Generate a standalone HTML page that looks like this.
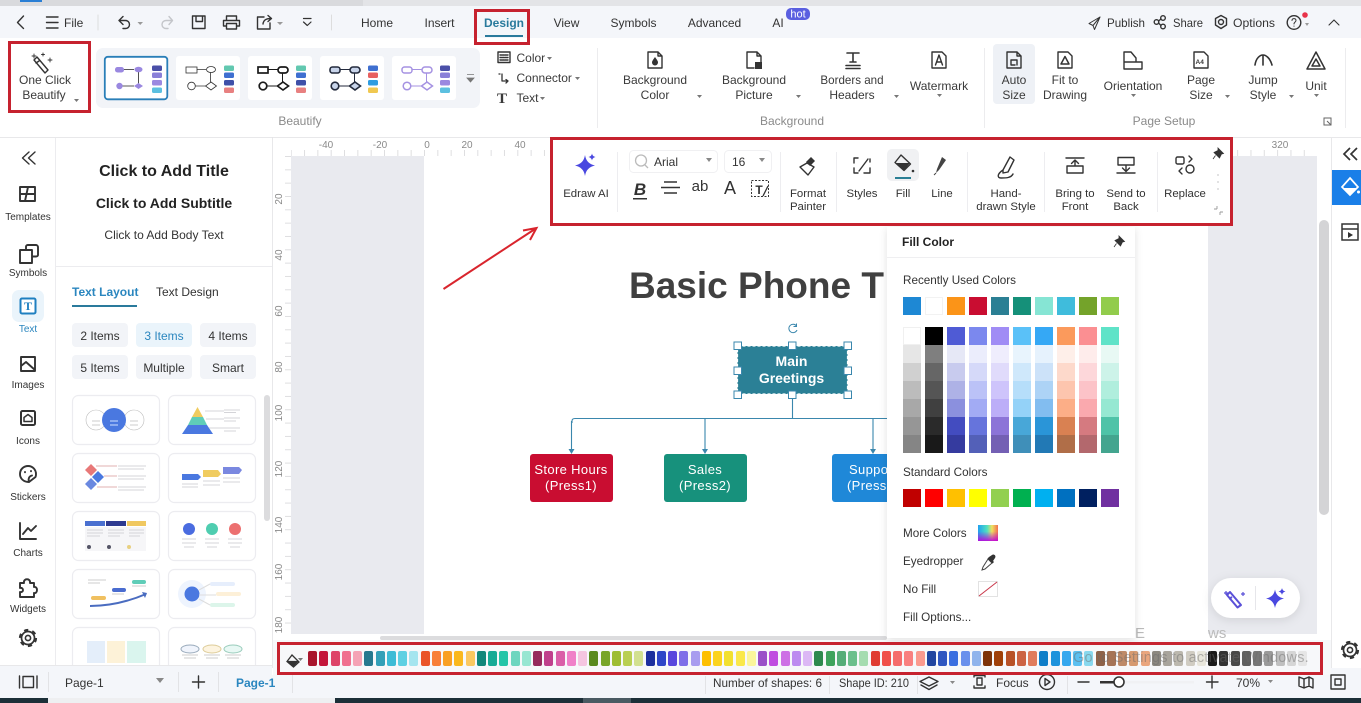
<!DOCTYPE html>
<html lang="en"><head><meta charset="utf-8"><title>Basic Phone Tree</title>
<style>
html,body{margin:0;padding:0;background:#fff;width:1361px;height:703px;overflow:hidden}
body{position:relative;font-family:"Liberation Sans",sans-serif}
svg{position:absolute;left:0;top:0;display:block}
svg text{font-family:"Liberation Sans",sans-serif;font-size:12px;fill:#333}
.m{text-anchor:middle}
.ic{fill:none;stroke:#333;stroke-width:1.4;stroke-linejoin:round;stroke-linecap:round}
.rbn text{fill:#3a3a3a}
svg text.tb{font-size:11.4px}
.g{fill:#8a8a8a!important}
.r{font-size:10px!important;fill:#8a8a8a!important}
.card{fill:#fff;stroke:#ececf0;stroke-width:1.2}
.chip{fill:#f2f4f8}
#pop{position:absolute;left:887px;top:227px;width:248px;height:411px;background:#fff;box-shadow:0 2px 8px rgba(0,0,0,.12);color:#333;font-size:11.7px}
#pop div.l{position:absolute;left:16px;white-space:nowrap;line-height:14px}
.row{position:absolute;left:16px;display:flex;gap:4px}
.row i{display:block;width:18px;height:18px}
.col{position:absolute;top:100px;width:18px}
.col i{display:block;width:18px;height:18px}
#bar{position:absolute;left:308px;top:651px;display:flex;gap:2.25px}
#bar i{display:block;width:9px;height:15px;border-radius:2px}
.box{position:absolute;border:3px solid #c6222f;box-sizing:border-box}
#wm{position:absolute;left:1073px;top:650px;font-size:14.5px;color:#6a6a6a;opacity:.45;white-space:nowrap;letter-spacing:.2px}
</style></head><body>
<svg width="1361" height="703" viewBox="0 0 1361 703">
<defs>
<pattern id="hr" x="424" y="0" width="13.33" height="10" patternUnits="userSpaceOnUse"><rect width="1" height="10" fill="#dedee0"/></pattern>
<pattern id="vr" x="0" y="156" width="10" height="13.33" patternUnits="userSpaceOnUse"><rect width="10" height="1" fill="#dedee0"/></pattern>
</defs>
<!-- base -->
<rect width="1361" height="703" fill="#fff"/>
<rect width="1361" height="6" fill="#e3e4e7"/><rect width="363" height="6" fill="#d9dadd"/><rect x="20" width="22" height="2" fill="#2a7fd5"/>
<rect y="6" width="1361" height="32" fill="#f4f6fa"/>
<rect y="137" width="1361" height="1" fill="#e8e8ea"/>

<!-- title row -->
<g class="ic">
<path d="M23.500 16L17.500 22.500L23.500 28.500"/>
<path d="M46.500 17H58M46.500 22.500H58M46.500 28H58"/>
<path d="M98 15V30" stroke="#ddd" stroke-width="1"/>
<path d="M123 16.500L119 20.500L123 24.500M119 20.500H125.500A4 4 0 0 1 125.500 28.500H123"/>
<path d="M169 16.500L172.500 20.500L169 24.500M172.500 20.500H166A4 4 0 0 0 166 28.500H168" stroke="#c4c6ca"/>
<path d="M193 16H205V28.500H192.500V16ZM196 16V21.500H202.500V16"/>
<path d="M226.500 20.500V16H236.500V20.500M226.500 26H223.500V20.500H239.500V26H236.500M226.500 23.500H236.500V29H226.500Z"/>
<path d="M264 17H257.500V29H270V23M263 24C263.500 20 266 18.500 271 18.500M268 15.500L271.500 18.500L268 21.500"/>
<path d="M303.500 18.500H311M303.500 22L307.300 25.500L311 22" stroke-width="1.200"/>
<path d="M331.500 15V30" stroke="#ddd" stroke-width="1"/>
</g>
<path d="M137.500 22H143L140.200 25ZM277 22H283L280 25Z" fill="#999"/>
<text x="64" y="27">File</text>
<text x="377" y="27" class="m">Home</text><text x="439.500" y="27" class="m">Insert</text>
<text x="504" y="27" class="m" style="fill:#2a7a9c;font-weight:700">Design</text>
<rect x="485" y="35" width="38" height="2" fill="#2a7a9c"/>
<text x="566.500" y="27" class="m">View</text><text x="633.500" y="27" class="m">Symbols</text><text x="714.500" y="27" class="m">Advanced</text><text x="778" y="27" class="m">AI</text>
<rect x="786" y="8" width="24" height="12" rx="5" fill="#5a5fe0"/><text x="798" y="17.500" class="m" style="fill:#fff;font-size:11px">hot</text>
<g class="ic" stroke-width="1.100">
<path d="M1100 17L1089 23.500L1093 25.500L1094.500 29.500L1100 17ZM1093 25.500L1100 17" stroke-width="1"/>
<circle cx="1156.500" cy="22" r="2.300"/><circle cx="1163" cy="18" r="2.300"/><circle cx="1163" cy="26.500" r="2.300"/><path d="M1158.500 21L1161 19M1158.500 23L1161 25.500"/>
<path d="M1221 15.500L1226.500 18.500V25L1221 28.500L1215.500 25V18.500Z"/><circle cx="1221" cy="22" r="2.500"/>
<circle cx="1294" cy="22.500" r="6.800"/><path d="M1292 20.500C1292 18 1296 18 1296 20.500C1296 22 1294 22 1294 24M1294 26V26.300" stroke-width="1"/>
<path d="M1329 25L1334 20L1339 25" stroke-width="1.100"/>
</g>
<path d="M1305 23H1309L1307 26Z" fill="#999"/>
<circle cx="1305" cy="15" r="2.800" fill="#e8334a"/>
<text x="1107" y="27" textLength="38" lengthAdjust="spacingAndGlyphs">Publish</text><text x="1173" y="27" textLength="30" lengthAdjust="spacingAndGlyphs">Share</text><text x="1233" y="27" textLength="42" lengthAdjust="spacingAndGlyphs">Options</text>

<!-- ribbon -->
<g class="rbn">
<g class="ic" stroke-width="1.300"><path d="M37 57L48 70L45 73L34 60ZM39 61L36 63"/><path d="M34 54V58M32 56H36M50 58V62M48 60H52M43 53V56M41.500 54.500H44.500" stroke-width=".9"/></g>
<text x="45" y="84" class="m">One Click</text><text x="44" y="99" class="m">Beautify</text>
<path d="M74 99H79L76.500 102Z" fill="#777"/>
<rect x="96" y="48" width="384" height="60" rx="7" fill="#f2f4f8"/>
<rect x="104.800" y="56.800" width="62.500" height="42.500" rx="3" fill="#fff" stroke="#2a7fb8" stroke-width="1.800"/>
<rect x="176" y="56" width="64" height="44" rx="3" fill="#fff"/><rect x="248" y="56" width="64" height="44" rx="3" fill="#fff"/><rect x="320" y="56" width="64" height="44" rx="3" fill="#fff"/><rect x="392" y="56" width="64" height="44" rx="3" fill="#fff"/>
<!-- thumb1 -->
<g transform="translate(104 56)"><path d="M14 13.500H30M34.500 14V30M30 30H16" stroke="#222" stroke-width=".8" fill="none"/><rect x="11" y="11" width="9" height="5.500" rx="2.500" fill="#9a88e0"/><ellipse cx="34.500" cy="13.500" rx="4" ry="2.800" fill="#9a88e0"/><circle cx="15.500" cy="30" r="3.200" fill="#9a88e0"/><path d="M34.500 27L39 30L34.500 33L30 30Z" fill="#9a88e0"/><rect x="48" y="9.500" width="10" height="5.500" rx="1.500" fill="#4a4fa8"/><rect x="48" y="16.500" width="10" height="5.500" rx="1.500" fill="#8a80d8"/><rect x="48" y="24" width="10" height="5.500" rx="1.500" fill="#9a88e0"/><rect x="48" y="31.500" width="10" height="5.500" rx="1.500" fill="#5cc0e0"/></g>
<!-- thumb2 -->
<g transform="translate(176 56)" fill="#fff" stroke="#333" stroke-width=".8"><path d="M10 13.500H30M34.500 14V30M30 30H16" fill="none"/><rect x="10" y="11" width="11" height="6"/><ellipse cx="35" cy="13.500" rx="4.500" ry="3"/><circle cx="15.500" cy="30" r="3.800"/><path d="M35 26L40.500 30L35 34L29.500 30Z"/><g stroke="none"><rect x="48" y="9.500" width="10" height="5.500" rx="1.500" fill="#62c8b0"/><rect x="48" y="16.500" width="10" height="5.500" rx="1.500" fill="#3f6fd0"/><rect x="48" y="24" width="10" height="5.500" rx="1.500" fill="#3f50a8"/><rect x="48" y="31.500" width="10" height="5.500" rx="1.500" fill="#e88080"/></g></g>
<!-- thumb3 -->
<g transform="translate(248 56)" fill="#fff" stroke="#1a1a1a" stroke-width="1.700"><path d="M10 13.500H30M34.500 14V30M30 30H16" fill="none" stroke-width="1"/><rect x="10" y="11" width="10" height="6"/><rect x="30" y="11" width="10" height="6" rx="3"/><circle cx="15" cy="30" r="3.800"/><path d="M35 26L40.500 30L35 34L29.500 30Z"/><g stroke="none"><rect x="48" y="9.500" width="10" height="5.500" rx="1.500" fill="#62c8b0"/><rect x="48" y="16.500" width="10" height="5.500" rx="1.500" fill="#3f6fd0"/><rect x="48" y="24" width="10" height="5.500" rx="1.500" fill="#3f50a8"/><rect x="48" y="31.500" width="10" height="5.500" rx="1.500" fill="#e88080"/></g></g>
<!-- thumb4 -->
<g transform="translate(320 56)" fill="#c8d4ea" stroke="#232a3c" stroke-width="1.600"><path d="M10 13.500H30M34.500 14V30M30 30H16" fill="none" stroke-width="1"/><rect x="10" y="11" width="10" height="6" rx="2.500"/><rect x="30" y="11" width="10" height="6" rx="3"/><circle cx="15" cy="30" r="3.800"/><path d="M35 26L40.500 30L35 34L29.500 30Z"/><g stroke="none"><rect x="48" y="9.500" width="10" height="5.500" rx="1.500" fill="#3f6fd0"/><rect x="48" y="16.500" width="10" height="5.500" rx="1.500" fill="#e86060"/><rect x="48" y="24" width="10" height="5.500" rx="1.500" fill="#2f9ce0"/><rect x="48" y="31.500" width="10" height="5.500" rx="1.500" fill="#f0c850"/></g></g>
<!-- thumb5 -->
<g transform="translate(392 56)" fill="#fff" stroke="#a592e2" stroke-width="1.500"><path d="M10 13.500H30M34.500 14V30M30 30H16" fill="none" stroke-width="1"/><rect x="10" y="11" width="10" height="6" rx="2.500"/><rect x="30" y="11" width="10" height="6" rx="3"/><circle cx="15" cy="30" r="3.800"/><path d="M35 26L40.500 30L35 34L29.500 30Z"/><g stroke="none"><rect x="48" y="9.500" width="10" height="5.500" rx="1.500" fill="#4a4fa8"/><rect x="48" y="16.500" width="10" height="5.500" rx="1.500" fill="#8a80d8"/><rect x="48" y="24" width="10" height="5.500" rx="1.500" fill="#9a88e0"/><rect x="48" y="31.500" width="10" height="5.500" rx="1.500" fill="#5cc0e0"/></g></g>
<path d="M467 74.500H474M467 78H474L470.500 82Z" fill="#777" stroke="#777" stroke-width=".8"/>
<text x="300" y="125" class="m g">Beautify</text>
<!-- color connector text -->
<g class="ic" stroke-width="1.200"><rect x="498" y="52" width="12" height="10.500"/><path d="M500 55H508M500 57.500H508M500 60H508" stroke-dasharray="1.500 1"/><path d="M502 74V81H508M499 74H500M508 81L506 79.500M508 81L506 83" stroke-width="1.300"/></g>
<text x="497" y="103" style="font-family:'Liberation Serif',serif;font-weight:700;font-size:15px">T</text>
<text x="516.500" y="62">Color</text><path d="M547 57H552L549.500 60Z" fill="#777"/>
<text x="516.500" y="82">Connector</text><path d="M575 77H580L577.500 80Z" fill="#777"/>
<text x="516.500" y="102">Text</text><path d="M540 97H545L542.500 100Z" fill="#777"/>
<rect x="597" y="48" width="1" height="80" fill="#ececee"/>
<!-- background group -->
<g class="ic" stroke-width="1.300">
<path d="M648 52H658L662 56V68H648ZM658 52V56H662"/><path d="M747 52H757L761 56V64M747 52V68H754M757 52V56H761"/>
<path d="M847 53H859M853 53V62M850 62H856M846 65.500H860M846 68.500H860" stroke-width="1.600"/>
<path d="M932 52H942L946 56V68H932Z"/><path d="M935.500 65L939 55L942.500 65M936.500 62H941.500"/>
</g>
<path d="M655 57C657 60 658 61 658 62.500A3 3 0 0 1 652 62.500C652 61 653 60 655 57Z" fill="#333"/><rect x="755" y="62" width="7" height="7" fill="#333"/>
<text x="655" y="84" class="m">Background</text><text x="655" y="99" class="m">Color</text>
<text x="754" y="84" class="m">Background</text><text x="754" y="99" class="m">Picture</text>
<text x="852" y="84" class="m" style="font-size:11.6px">Borders and</text><text x="852" y="99" class="m">Headers</text>
<text x="939" y="90" class="m">Watermark</text>
<path d="M697 95H702L699.500 98ZM796 95H801L798.500 98ZM894 95H899L896.500 98ZM937 94H942L939.500 97Z" fill="#777"/>
<rect x="984" y="48" width="1" height="80" fill="#ececee"/>
<!-- page setup -->
<rect x="993" y="44" width="42" height="60" rx="4" fill="#eef1f6"/>
<g class="ic" stroke-width="1.300">
<path d="M1007 52H1017L1021 56V68H1007ZM1017 52V56H1021"/><path d="M1011 60H1017V65M1011 60V65H1015" stroke-width="1.400"/>
<path d="M1058 52H1068L1072 56V68H1058Z"/><path d="M1065 56.500L1069 64H1061Z" stroke-width="1.500"/>
<path d="M1124 52H1131L1136 58V61M1124 52V66M1124 62H1142V69H1124Z"/>
<path d="M1194 52H1204L1208 56V68H1194Z"/>
<path d="M1255 65C1256 58 1260 55 1263 55C1266 55 1270 58 1272 65M1263 55V65" stroke-width="1.600"/>
<path d="M1316 52L1325 69H1307ZM1316 59L1320 66H1312Z" stroke-width="1.500"/>
</g>
<text x="1195.500" y="64" style="font-size:6.500px;font-weight:700">A4</text>
<text x="1014" y="84" class="m">Auto</text><text x="1014" y="99" class="m">Size</text>
<text x="1065" y="84" class="m">Fit to</text><text x="1065" y="99" class="m">Drawing</text>
<text x="1133" y="90" class="m">Orientation</text>
<text x="1201" y="84" class="m">Page</text><text x="1201" y="99" class="m">Size</text>
<text x="1263" y="84" class="m">Jump</text><text x="1263" y="99" class="m">Style</text>
<text x="1316" y="90" class="m">Unit</text>
<path d="M1131 94H1136L1133.500 97ZM1225 95H1230L1227.500 98ZM1289 95H1294L1291.500 98ZM1314 94H1319L1316.500 97Z" fill="#777"/>
<rect x="1345" y="48" width="1" height="80" fill="#ececee"/>
<text x="792" y="125" class="m g">Background</text><text x="1164" y="125" class="m g">Page Setup</text>
<path d="M1324 118H1331V125H1324ZM1327 121L1331 125" fill="none" stroke="#666" stroke-width="1"/>
</g>

<!-- canvas -->
<rect x="272" y="138" width="1059" height="497" fill="#fff"/>
<rect x="291" y="156" width="1026" height="478" fill="#e9eaef"/>
<rect x="424" y="156" width="784" height="478" fill="#fff"/>
<rect x="291" y="150" width="1026" height="6" fill="url(#hr)"/>
<rect x="285" y="156" width="6" height="478" fill="url(#vr)"/>
<rect x="272" y="137" width="1" height="498" fill="#e4e4e6"/>
<text x="326" y="148" class="m r">-40</text><text x="380" y="148" class="m r">-20</text><text x="427" y="148" class="m r">0</text><text x="467" y="148" class="m r">20</text><text x="520" y="148" class="m r">40</text>
<text x="1280" y="148" class="m r">320</text>
<g class="r">
<text transform="translate(282 199) rotate(-90)" class="m r">20</text><text transform="translate(282 255) rotate(-90)" class="m r">40</text><text transform="translate(282 311) rotate(-90)" class="m r">60</text><text transform="translate(282 367) rotate(-90)" class="m r">80</text><text transform="translate(282 413) rotate(-90)" class="m r">100</text><text transform="translate(282 469) rotate(-90)" class="m r">120</text><text transform="translate(282 525) rotate(-90)" class="m r">140</text><text transform="translate(282 572) rotate(-90)" class="m r">160</text><text transform="translate(282 625) rotate(-90)" class="m r">180</text>
</g>
<!-- diagram -->
<text x="629" y="298" style="font-size:37px;font-weight:700;fill:#404040">Basic Phone T</text>
<path d="M792.500 394V418.500M572 423V421Q572 418.500 575 418.500H887M571.500 421V450M705 418.500V450M873 418.500V450" fill="none" stroke="#3a87ad" stroke-width="1.100"/>
<path d="M568.500 449H574.500L571.500 454ZM702 449H708L705 454ZM870 449H876L873 454Z" fill="#3a87ad"/>
<rect x="737.500" y="346" width="110" height="48" fill="#2b8096"/>
<rect x="737.500" y="346" width="110" height="48" fill="none" stroke="#fff" stroke-width="1.200" stroke-dasharray="3 2"/>
<g fill="#fff" stroke="#3a87ad" stroke-width="1"><rect x="734" y="342" width="7.500" height="7.500"/><rect x="788.500" y="342" width="7.500" height="7.500"/><rect x="844" y="342" width="7.500" height="7.500"/><rect x="734" y="367" width="7.500" height="7.500"/><rect x="844" y="367" width="7.500" height="7.500"/><rect x="734" y="391" width="7.500" height="7.500"/><rect x="788.500" y="391" width="7.500" height="7.500"/><rect x="844" y="391" width="7.500" height="7.500"/></g>
<path d="M796.500 326A4.200 4.200 0 1 0 797 330M796.500 323.500V326.500H793.500" fill="none" stroke="#3a87ad" stroke-width="1"/>
<text x="791.500" y="366" class="m" style="fill:#fff;font-weight:700;font-size:14px">Main</text>
<text x="791.500" y="383" class="m" style="fill:#fff;font-weight:700;font-size:14px">Greetings</text>
<rect x="530" y="454" width="83" height="48" rx="3" fill="#c90d31"/><rect x="664" y="454" width="83" height="48" rx="3" fill="#17917c"/><rect x="832" y="454" width="60" height="48" rx="3" fill="#1f88d8"/>
<text x="571" y="474" class="m" style="fill:#fff;font-size:13px;letter-spacing:.35px">Store Hours</text><text x="571" y="490" class="m" style="fill:#fff;font-size:13px;letter-spacing:.35px">(Press1)</text>
<text x="705" y="474" class="m" style="fill:#fff;font-size:13px;letter-spacing:.35px">Sales</text><text x="705" y="490" class="m" style="fill:#fff;font-size:13px;letter-spacing:.35px">(Press2)</text>
<text x="849" y="474" style="fill:#fff;font-size:13px;letter-spacing:.35px">Suppo</text><text x="847" y="490" style="fill:#fff;font-size:13px;letter-spacing:.35px">(Press</text>
<path d="M443.500 289L535 229M523 230.500L536.500 228L530 240" fill="none" stroke="#d9252d" stroke-width="2"/>
<!-- fab -->
<rect x="1211" y="578" width="89" height="40" rx="20" fill="#fff" style="filter:drop-shadow(0 2px 5px rgba(0,0,0,.1))"/>
<rect x="1255" y="586" width="1" height="24" fill="#e6e6ea"/>
<g fill="none" stroke="#5a50d8" stroke-width="2" stroke-linejoin="round"><path d="M1230 592L1241 605L1237.500 607.500L1227 595ZM1232 597L1229 599"/><path d="M1226 591V595M1224 593H1228M1243 592V596M1241 594H1245" stroke-width="1.200"/></g>
<path d="M1275 589.500C1276 595 1279 597.500 1284 598.500C1279 599.500 1276 602.500 1275 608C1274 602.500 1271 599.500 1266 598.500C1271 597.500 1274 595 1275 589.500ZM1282 588C1282.500 590 1283.500 591 1285.500 591.500C1283.500 592 1282.500 593 1282 595C1281.500 593 1280.500 592 1278.500 591.500C1280.500 591 1281.500 590 1282 588Z" fill="#4a48e0"/>
<!-- scrollbars -->
<rect x="1319" y="220" width="10" height="295" rx="5" fill="#d4d4d6"/>
<rect x="380" y="636" width="507" height="4" rx="2" fill="#dcdcde"/>

<!-- floating toolbar -->
<rect x="551" y="138" width="681" height="88" fill="#fff"/>
<g fill="#ededf0"><rect x="617" y="152" width="1" height="60"/><rect x="780" y="152" width="1" height="60"/><rect x="836" y="152" width="1" height="60"/><rect x="967" y="152" width="1" height="60"/><rect x="1044" y="152" width="1" height="60"/><rect x="1157" y="152" width="1" height="60"/></g>
<path d="M585 155C586 161 589 164 595 165.500C589 167 586 170 585 176C584 170 581 167 575 165.500C581 164 584 161 585 155ZM592 153.500C592.500 155.500 593.500 156.500 595.500 157C593.500 157.500 592.500 158.500 592 160.500C591.500 158.500 590.500 157.500 588.500 157C590.500 156.500 591.500 155.500 592 153.500Z" fill="#4a48e0"/>
<text x="586" y="197" class="m tb">Edraw AI</text>
<rect x="629.500" y="150.500" width="88" height="22" rx="4" fill="#fff" stroke="#f0f0f2"/>
<rect x="724.500" y="150.500" width="47" height="22" rx="4" fill="#fff" stroke="#f0f0f2"/>
<circle cx="641" cy="160.500" r="5.500" fill="none" stroke="#bbb" stroke-width="1.300"/><path d="M645 165L648 168" stroke="#bbb" stroke-width="1.300"/>
<text x="654" y="166">Arial</text><text x="732" y="166">16</text>
<path d="M706 158H712L709 162ZM759 158H765L762 162Z" fill="#888"/>
<text x="640" y="195" class="m" style="font-size:17px;font-weight:700;font-style:italic">B</text><rect x="633" y="198" width="14" height="1.500" fill="#333"/>
<path d="M664 182H677M661 187.500H680M664 193H677" stroke="#333" stroke-width="1.400"/>
<text x="700" y="191" class="m" style="font-size:15px">ab</text>
<text x="730" y="194" class="m" style="font-size:18px">A</text>
<rect x="751.500" y="180.500" width="17" height="16" fill="none" stroke="#333" stroke-dasharray="2 1.500"/><text x="759" y="194" class="m" style="font-size:12px;font-weight:700">T</text><path d="M763 196L768 186" stroke="#333" stroke-width="1.300"/>
<rect x="887" y="149" width="32" height="32" rx="5" fill="#f0f1f3"/>
<g class="ic" stroke-width="1.500">
<path d="M807 163L814 167L808 175L800 167Z"/>
<path d="M858 158H854V163M854 168V173H858M864 173H870V168M870 162V159M868 159L859 171"/>
<path d="M1003 170C997 174 997 178 1001 178C1006 178 1011 178 1013 174M1003 170L1010 157L1014 160L1008 172L1003 173Z"/>
<path d="M1066 158H1084M1075 165V160.500M1071.500 163.500L1075 160L1078.500 163.500M1067 166H1083V173H1067Z"/>
<path d="M1118 157.500H1134V165H1118ZM1126 165V171M1122.500 168L1126 171.500L1129.500 168M1117 173H1135"/>
<rect x="1176" y="157" width="8" height="7" rx="1.500"/><circle cx="1190" cy="169" r="4"/><path d="M1189 156L1192 159L1189 162M1182 168L1179 171L1182 174"/>
<path d="M901 155L910.500 164L904 170.500L895 162.500Z"/>
</g>
<path d="M895.500 163H910L904 170.500Z" fill="#333"/>
<path d="M811 157L815 161L810 166L806 162Z" fill="#333"/>
<path d="M942 157L946 160L939 170L936 173L937 169Z" fill="#444"/><path d="M936 173L934 175" stroke="#444"/>
<rect x="895" y="177" width="16" height="2" fill="#2a7f94"/>
<circle cx="913" cy="171" r="1.300" fill="#333"/>
<text x="808" y="197" class="m tb">Format</text><text x="808" y="210" class="m tb">Painter</text>
<text x="862" y="197" class="m tb">Styles</text><text x="903" y="197" class="m tb">Fill</text><text x="942" y="197" class="m tb">Line</text>
<text x="1006" y="197" class="m tb">Hand-</text><text x="1006" y="210" class="m tb">drawn Style</text>
<text x="1075" y="197" class="m tb">Bring to</text><text x="1075" y="210" class="m tb">Front</text>
<text x="1126" y="197" class="m tb">Send to</text><text x="1126" y="210" class="m tb">Back</text>
<text x="1185" y="197" class="m tb">Replace</text>
<path d="M1218 148L1223.500 153.500L1221.500 154L1219.500 158L1214 152.500L1218 150.500ZM1215.500 155.500L1213 159" fill="#333" stroke="#333" stroke-width=".8"/>
<g fill="#d8d8da"><circle cx="1218" cy="175" r="1"/><circle cx="1218" cy="182" r="1"/><circle cx="1218" cy="189" r="1"/></g>
<path d="M1217 209H1214M1217 209V206M1220 212H1223M1220 212V215" fill="none" stroke="#999" stroke-width=".9"/>

<!-- left rail -->
<rect x="0" y="138" width="55" height="530" fill="#fff"/><rect x="55" y="138" width="1" height="530" fill="#ececef"/>
<rect x="272" y="138" width="1" height="530" fill="#e8e8ea"/>
<g class="ic" stroke-width="2.200">
<path d="M29 152L22.500 158L29 164M35 152L28.500 158L35 164"/>
<path d="M20 187H35V201H20ZM20 194H35M28 187L25 201" stroke-width="1.900"/>
<path d="M26 250V246.500C26 245.500 27 245 28 245H36C37 245 38 246 38 247V255C38 256 37 256.500 36 256.500H33M20 250H32V263H20Z" stroke-width="1.900"/>
<path d="M21 357H35V371H21ZM21 366L26 362L35 370" stroke-width="1.900"/>
<rect x="21" y="411" width="14" height="14" rx="1.500" stroke-width="2"/><path d="M28 414.500L32 417.500V421.500H24V417.500Z" stroke-width="1.500"/>
<path d="M29 482C23 482 20 478 20 474C20 469 24 466 28 466C33 466 36 470 36 474C36 475 36 476 35.500 477L29 482C28 479 29 476 32 475.500M25 472V472.300M31 471V471.300" stroke-width="1.900"/>
<path d="M20 523V539H36M23 534L28 528L31 531L36 526" stroke-width="1.900"/>
<path d="M20 583H24C23 578 31 578 30 583H34V587C38 586 38 594 34 593V597H20V592C24 593 24 587 20 588Z" stroke-width="1.900"/>
</g>
<g fill="none" stroke="#333"><circle cx="28" cy="638" r="6.500" stroke-width="1.700"/><circle cx="28" cy="638" r="8" stroke-width="2.200" stroke-dasharray="4.200 4.180"/><circle cx="28" cy="638" r="2.600" stroke-width="1.600"/></g>
<rect x="12" y="290" width="32" height="32" rx="7" fill="#eaf4fb"/>
<rect x="20.500" y="298.500" width="15" height="15" rx="1.500" fill="#fff" stroke="#1f7fc0" stroke-width="2"/>
<text x="28" y="310" class="m" style="font-family:'Liberation Serif',serif;font-weight:700;font-size:12px;fill:#1f7fc0">T</text>
<text x="28" y="220" class="m" style="font-size:10px">Templates</text><text x="28" y="276" class="m" style="font-size:10px">Symbols</text><text x="28" y="332" class="m" style="font-size:10px;fill:#2a86bf">Text</text><text x="28" y="388" class="m" style="font-size:10px">Images</text><text x="28" y="444" class="m" style="font-size:10px">Icons</text><text x="28" y="500" class="m" style="font-size:10px">Stickers</text><text x="28" y="556" class="m" style="font-size:10px">Charts</text><text x="28" y="612" class="m" style="font-size:10px">Widgets</text>

<!-- panel -->
<text x="164" y="176" class="m" style="font-size:16px;font-weight:700;fill:#222">Click to Add Title</text>
<text x="164" y="208" class="m" style="font-size:14px;font-weight:700;fill:#222">Click to Add Subtitle</text>
<text x="164" y="239" class="m">Click to Add Body Text</text>
<rect x="56" y="266" width="216" height="1" fill="#ececef"/>
<text x="72" y="296" style="font-weight:700;fill:#2a86bf">Text Layout</text><text x="156" y="296">Text Design</text>
<rect x="72" y="305" width="65" height="2" fill="#2a7a9c"/>
<rect class="chip" x="72" y="323" width="56" height="24" rx="4"/><rect x="136" y="323" width="56" height="24" rx="4" fill="#eaf4fb"/><rect class="chip" x="200" y="323" width="56" height="24" rx="4"/>
<rect class="chip" x="72" y="355" width="56" height="24" rx="4"/><rect class="chip" x="136" y="355" width="56" height="24" rx="4"/><rect class="chip" x="200" y="355" width="56" height="24" rx="4"/>
<text x="100" y="340" class="m">2 Items</text><text x="164" y="340" class="m" style="fill:#2a86bf">3 Items</text><text x="228" y="340" class="m">4 Items</text>
<text x="100" y="372" class="m">5 Items</text><text x="164" y="372" class="m">Multiple</text><text x="228" y="372" class="m">Smart</text>
<rect x="264" y="395" width="6" height="126" rx="3" fill="#dcdcde"/>
<g class="card"><rect x="72.500" y="395.500" width="87" height="49" rx="6"/><rect x="168.500" y="395.500" width="87" height="49" rx="6"/><rect x="72.500" y="453.500" width="87" height="49" rx="6"/><rect x="168.500" y="453.500" width="87" height="49" rx="6"/><rect x="72.500" y="511.500" width="87" height="49" rx="6"/><rect x="168.500" y="511.500" width="87" height="49" rx="6"/><rect x="72.500" y="569.500" width="87" height="49" rx="6"/><rect x="168.500" y="569.500" width="87" height="49" rx="6"/><rect x="72.500" y="627.500" width="87" height="49" rx="6"/><rect x="168.500" y="627.500" width="87" height="49" rx="6"/></g>
<!-- card art -->
<circle cx="96" cy="420" r="10" fill="#fff" stroke="#bbb" stroke-width=".6"/><circle cx="134" cy="420" r="10" fill="#fff" stroke="#bbb" stroke-width=".6"/><circle cx="114" cy="420" r="12" fill="#4a78e0"/>
<path d="M92 421H100M130 421H138M92 425H100M130 425H138" stroke="#ccc"/><path d="M110 421H118M110 425H118" stroke="#cfe0ff"/>
<path d="M197.500 407L203 417H192Z" fill="#f0cc60"/><path d="M192 417H203L207 425H188Z" fill="#5fcdb8"/><path d="M188 425H207L213 434H182Z" fill="#4a78e0"/>
<path d="M205 411H224M206 419H224M209 428H224M224 410H240M224 418H240M224 428H240M224 412.500H236M224 421H236M224 431H236" stroke="#d4d4d8" stroke-width="1"/>
<path d="M91 464L97 470L91 476L85 470Z" fill="#e87878"/><path d="M98 471L104 477L98 483L92 477Z" fill="#4a78e0"/><path d="M91 478L97 484L91 490L85 484Z" fill="#6a88e0"/>
<path d="M96 466H117M104 476H117M97 487H117" stroke="#e0b0b0"/><path d="M118 466H146M118 476H146M118 487H146M118 469H144M118 479H144M118 490H144" stroke="#d4d4d8"/>
<path d="M182 474H198L201 477L198 480H182Z" fill="#4a78e0"/><path d="M203 470H218L221 474L218 477H203Z" fill="#f0cc60"/><path d="M223 467H239L242 470L239 474H223Z" fill="#7a88e0"/><path d="M182 484H198M182 487H198M203 481H220M203 485H220M223 478H240M223 482H240" stroke="#d4d4d8"/>
<rect x="85" y="521" width="20" height="5" fill="#4a70d0"/><rect x="106" y="521" width="20" height="5" fill="#2e3a90"/><rect x="127" y="521" width="19" height="5" fill="#f0c860"/><rect x="85" y="527" width="61" height="24" fill="#f6f6f8"/>
<path d="M87 530H103M108 530H124M129 530H144M87 533H103M108 533H124M129 533H144M87 536H100M108 536H120M129 536H140" stroke="#d4d4d8"/><circle cx="89" cy="547" r="2" fill="#556"/><circle cx="109" cy="547" r="2" fill="#556"/><circle cx="129" cy="547" r="2" fill="#e8d080"/>
<circle cx="189" cy="529" r="6" fill="#4a6ce0"/><circle cx="212" cy="529" r="6" fill="#4fcdb0"/><circle cx="235" cy="529" r="6" fill="#ec7070"/>
<path d="M182 539H196M205 539H219M228 539H242M182 543H196M205 543H219M228 543H242M184 547H194M207 547H217M230 547H240" stroke="#d4d4d8"/>
<path d="M90 606C112 606 132 600 146 594" fill="none" stroke="#4a6cc0" stroke-width="2"/><path d="M142 592L147 593L145 598Z" fill="#4a6cc0"/>
<rect x="91" y="596" width="15" height="4" rx="2" fill="#f0c060"/><rect x="112" y="588" width="14" height="4" rx="2" fill="#4a6cd0"/><rect x="132" y="580" width="14" height="4" rx="2" fill="#5fcdb8"/>
<path d="M88 580H106M88 583H100M132 586H146M112 594H124" stroke="#ccc"/>
<circle cx="192" cy="594" r="14" fill="#eef4fe"/><circle cx="192" cy="594" r="7.500" fill="#4a78e0"/>
<rect x="210" y="582" width="25" height="4" rx="2" fill="#e6eefc"/><rect x="216" y="592" width="25" height="4" rx="2" fill="#fdf0d8"/><rect x="210" y="603" width="25" height="4" rx="2" fill="#dcf5ea"/>
<path d="M199 590L210 584M199 595H216M199 599L210 605" stroke="#ddd"/>
<rect x="87" y="641" width="18" height="22" fill="#e4eefa"/><rect x="107" y="641" width="18" height="22" fill="#fdf2d8"/><rect x="127" y="641" width="19" height="22" fill="#daf5ee"/>
<ellipse cx="190" cy="649" rx="9" ry="4" fill="#f0f4fc" stroke="#9ab"/><ellipse cx="212" cy="649" rx="9" ry="4" fill="#fdf4e0" stroke="#dc9"/><ellipse cx="233" cy="649" rx="9" ry="4" fill="#e8f8f4" stroke="#9cb"/>
<path d="M182 655H198M204 655H220M225 655H241M184 658H196M206 658H218M227 658H239" stroke="#ccc"/>

<!-- right rail -->
<rect x="1331" y="138" width="1" height="530" fill="#e8e8ea"/>
<path d="M1350 148L1344 154L1350 160M1357 148L1351 154L1357 160" fill="none" stroke="#333" stroke-width="1.700"/>
<rect x="1332" y="170" width="29" height="35" fill="#1a7fe8"/>
<path d="M1350 178L1358 187L1350 195L1342 187Z" fill="none" stroke="#fff" stroke-width="1.700"/><path d="M1343 188H1357L1350 195Z" fill="#fff"/><circle cx="1358.500" cy="192" r="1.500" fill="#fff"/>
<path d="M1342 224H1358V240H1342ZM1342 229H1358" fill="none" stroke="#333" stroke-width="1.500"/><path d="M1348 232L1353 235L1348 238Z" fill="#333"/>
<g fill="none" stroke="#333"><circle cx="1350" cy="650" r="6.500" stroke-width="1.700"/><circle cx="1350" cy="650" r="8" stroke-width="2.200" stroke-dasharray="4.200 4.180"/><circle cx="1350" cy="650" r="2.600" stroke-width="1.600"/></g>

<!-- bottom -->
<rect x="273" y="640" width="1058" height="35" fill="#f7f8fa"/>
<rect y="666" width="272" height="32" fill="#f4f6fa"/><rect x="272" y="675" width="1089" height="23" fill="#f4f6fa"/><rect x="1331" y="668" width="30" height="30" fill="#f4f6fa"/>
<rect y="665" width="272" height="1" fill="#e8e8ea"/>
<rect y="698" width="1361" height="5" fill="#1c2f38"/><rect x="48" y="698" width="287" height="5" fill="#eeeff1"/><rect x="583" y="698" width="48" height="5" fill="#4a5a62"/>
<path d="M292 655L299 662L293.500 667L287 661.500ZM287 661.500H298" fill="none" stroke="#333" stroke-width="1.300"/><path d="M288 662H298L293.500 666.500Z" fill="#333"/><path d="M298 658H303L300.500 661Z" fill="#777"/>
<g fill="#e2e3e6"><rect x="48" y="672" width="1" height="20"/><rect x="178" y="672" width="1" height="20"/><rect x="218" y="672" width="1" height="20"/><rect x="292" y="675" width="1" height="18"/><rect x="705" y="676" width="1" height="18"/><rect x="829" y="676" width="1" height="18"/><rect x="917" y="676" width="1" height="18"/><rect x="1067" y="676" width="1" height="18"/></g>
<g class="ic" stroke-width="1.100">
<path d="M19.500 676V688M37 676V688M23 676.500H33.500V687.500H23Z"/>
<path d="M198.500 676V688M192.500 682H204.500"/>
<path d="M929 677L938 681.500L929 686L920 681.500ZM921 685L929 689.500L937 685"/>
<path d="M974 677V675.500H985V677M974 686V688H985V686M977 678H982V685H977Z"/>
<circle cx="1047" cy="682" r="7.500"/><path d="M1045 678.500L1050 682L1045 685.500Z"/>
<path d="M1078 682H1089M1206.500 682H1218M1212 676V688"/>
<path d="M1299 677L1304 679L1309 677L1313 679V688L1309 686L1304 688L1299 686ZM1304 679V688M1309 677V686"/>
<path d="M1331 675H1345V689H1331ZM1335 679H1341V685H1335Z"/>
</g>
<path d="M156 678H164L160 683ZM950 681H955L952.500 684ZM1268 680H1273L1270.500 683Z" fill="#888"/>
<text x="65" y="687">Page-1</text><text x="236" y="687" style="font-weight:700;fill:#2a86bf">Page-1</text>
<text x="713" y="687" textLength="109" lengthAdjust="spacingAndGlyphs">Number of shapes: 6</text><text x="839" y="687" textLength="70" lengthAdjust="spacingAndGlyphs">Shape ID: 210</text><text x="996" y="687">Focus</text><text x="1236" y="687">70%</text>
<rect x="1100" y="681" width="14" height="2.500" fill="#333"/><rect x="1114" y="681" width="80" height="2.500" fill="#f0f1f4"/><circle cx="1119" cy="682" r="5" fill="#fff" stroke="#333" stroke-width="1.600"/>
<text x="1135" y="638" style="font-size:15px;fill:#bbb">E</text><text x="1208" y="638" style="font-size:15px;fill:#bbb">ws</text>
</svg>

<div id="bar"><i style="background:#a8152c"></i><i style="background:#c4163a"></i><i style="background:#de4468"></i><i style="background:#f0708f"></i><i style="background:#f5a3b5"></i><i style="background:#26798f"></i><i style="background:#33a0b8"></i><i style="background:#3ebcd6"></i><i style="background:#5ed0e2"></i><i style="background:#a5e5ef"></i><i style="background:#ea5428"></i><i style="background:#f87f38"></i><i style="background:#f9a024"></i><i style="background:#fab81e"></i><i style="background:#fbc860"></i><i style="background:#12877a"></i><i style="background:#17ab96"></i><i style="background:#25c5a8"></i><i style="background:#6ed6bf"></i><i style="background:#98e6d2"></i><i style="background:#962a5c"></i><i style="background:#c0408c"></i><i style="background:#da5fa8"></i><i style="background:#f080c8"></i><i style="background:#f5c5e0"></i><i style="background:#5a8a1e"></i><i style="background:#78a528"></i><i style="background:#9ebd32"></i><i style="background:#b9cf52"></i><i style="background:#d2e090"></i><i style="background:#1d2f9e"></i><i style="background:#2f46c8"></i><i style="background:#5846dd"></i><i style="background:#7e6ee8"></i><i style="background:#a89cef"></i><i style="background:#fdbf00"></i><i style="background:#fbd31e"></i><i style="background:#f2e02f"></i><i style="background:#fae84a"></i><i style="background:#fbf59c"></i><i style="background:#9a50c8"></i><i style="background:#c04de0"></i><i style="background:#cd70e5"></i><i style="background:#bd8bf0"></i><i style="background:#dcb8f5"></i><i style="background:#2e8a4e"></i><i style="background:#3ea35c"></i><i style="background:#55ad78"></i><i style="background:#6bbf8c"></i><i style="background:#a5dcb0"></i><i style="background:#e03c32"></i><i style="background:#f0504a"></i><i style="background:#f56c6c"></i><i style="background:#f98080"></i><i style="background:#fb9a8e"></i><i style="background:#2145a0"></i><i style="background:#2e56c0"></i><i style="background:#3a6ee0"></i><i style="background:#6a90ec"></i><i style="background:#90b4ec"></i><i style="background:#7e3308"></i><i style="background:#a04008"></i><i style="background:#b85228"></i><i style="background:#cc6444"></i><i style="background:#e07c5c"></i><i style="background:#0f7ec8"></i><i style="background:#1e93dc"></i><i style="background:#36a8ee"></i><i style="background:#5cc0f0"></i><i style="background:#88d8ee"></i><i style="background:#8e6248"></i><i style="background:#a67456"></i><i style="background:#be8a68"></i><i style="background:#d69a70"></i><i style="background:#eaa67e"></i><i style="background:#8c8880"></i><i style="background:#a8a49c"></i><i style="background:#bcb8ae"></i><i style="background:#d0ccc2"></i><i style="background:#e8e6dc"></i><i style="background:#1a1a1a"></i><i style="background:#333"></i><i style="background:#484848"></i><i style="background:#5f5f5f"></i><i style="background:#777"></i><i style="background:#9a9a9a"></i><i style="background:#c0c0c0"></i><i style="background:#d6d6d6"></i><i style="background:#e6e6e6"></i></div>
<div id="wm">Go to Settings to activate Windows.</div>

<div id="pop">
<div class="l" style="top:8px;left:15px;font-weight:700;color:#222;font-size:12px">Fill Color</div>
<svg style="left:224px;top:7px" width="16" height="16" viewBox="0 0 16 16"><path d="M8 2L13.500 7.500L11.500 8L9.500 12L4 6.500L8 4.500ZM5.500 9.500L3 13" fill="#333" stroke="#333" stroke-width=".8"/></svg>
<div style="position:absolute;left:0;right:0;top:30px;height:1px;background:#efeff1"></div>
<div class="l" style="top:47px">Recently Used Colors</div>
<div class="row" style="top:70px"><i style="background:#1e88d4"></i><i style="background:#fff;box-shadow:inset 0 0 0 1px #f2f2f2"></i><i style="background:#fb9418"></i><i style="background:#c90d31"></i><i style="background:#2b7f94"></i><i style="background:#159079"></i><i style="background:#86e5d4"></i><i style="background:#3fbcdc"></i><i style="background:#74a32a"></i><i style="background:#92cc4c"></i></div>
<div class="col" style="left:16px"><i style="background:#fff;box-shadow:inset 0 0 0 1px #f0f0f0"></i><i style="background:#e6e6e6"></i><i style="background:#d0d0d0"></i><i style="background:#bcbcbc"></i><i style="background:#a8a8a8"></i><i style="background:#969696"></i><i style="background:#858585"></i></div>
<div class="col" style="left:38px"><i style="background:#000"></i><i style="background:#7f7f7f"></i><i style="background:#666"></i><i style="background:#555"></i><i style="background:#404040"></i><i style="background:#2a2a2a"></i><i style="background:#191919"></i></div>
<div class="col" style="left:60px"><i style="background:#4f5bd5"></i><i style="background:#e6e8f6"></i><i style="background:#c8cbee"></i><i style="background:#aeb2e6"></i><i style="background:#8b90de"></i><i style="background:#434cc0"></i><i style="background:#353b9f"></i></div>
<div class="col" style="left:82px"><i style="background:#7b88ee"></i><i style="background:#ebedfc"></i><i style="background:#d5d9f9"></i><i style="background:#bbc2f7"></i><i style="background:#a2abf4"></i><i style="background:#6674dc"></i><i style="background:#5360b8"></i></div>
<div class="col" style="left:104px"><i style="background:#a08cf5"></i><i style="background:#efedfd"></i><i style="background:#e0dbfb"></i><i style="background:#cec4fb"></i><i style="background:#bcaef8"></i><i style="background:#8c74d8"></i><i style="background:#7460b4"></i></div>
<div class="col" style="left:126px"><i style="background:#5ac1f8"></i><i style="background:#e8f4fd"></i><i style="background:#cfe8fb"></i><i style="background:#b6defa"></i><i style="background:#94d2f8"></i><i style="background:#48a7d8"></i><i style="background:#3f8fb9"></i></div>
<div class="col" style="left:148px"><i style="background:#35a8f5"></i><i style="background:#e6f2fd"></i><i style="background:#cce2f9"></i><i style="background:#add3f6"></i><i style="background:#82bdf0"></i><i style="background:#2a95d8"></i><i style="background:#2279b5"></i></div>
<div class="col" style="left:170px"><i style="background:#fb9a5c"></i><i style="background:#feefe9"></i><i style="background:#fdd9cb"></i><i style="background:#fdc5ae"></i><i style="background:#fcae87"></i><i style="background:#d98152"></i><i style="background:#b06e48"></i></div>
<div class="col" style="left:192px"><i style="background:#fb8f92"></i><i style="background:#feeceb"></i><i style="background:#fdd7da"></i><i style="background:#fcc3c8"></i><i style="background:#faa9ae"></i><i style="background:#d57a80"></i><i style="background:#b3686d"></i></div>
<div class="col" style="left:214px"><i style="background:#5fe3c8"></i><i style="background:#e8f9f4"></i><i style="background:#cdf3e9"></i><i style="background:#b0eedd"></i><i style="background:#96e8d2"></i><i style="background:#4fc3a8"></i><i style="background:#44a58f"></i></div>
<div class="l" style="top:239px">Standard Colors</div>
<div class="row" style="top:262px"><i style="background:#c00000"></i><i style="background:#f00"></i><i style="background:#ffc000"></i><i style="background:#ff0"></i><i style="background:#92d050"></i><i style="background:#00b050"></i><i style="background:#00b0f0"></i><i style="background:#0070c0"></i><i style="background:#002060"></i><i style="background:#7030a0"></i></div>
<div class="l" style="top:300px">More Colors</div>
<div style="position:absolute;left:91px;top:298px;width:20px;height:16px;background:linear-gradient(180deg,rgba(255,255,255,0) 40%,rgba(190,0,220,.9)),linear-gradient(90deg,#20a0f0,#50e0c0 45%,#f0e060 70%,#f07050)"></div>
<div class="l" style="top:328px">Eyedropper</div>
<svg style="left:91px;top:326px" width="20" height="18" viewBox="0 0 20 18"><path d="M10 6L14 10L7 16L4 17L5 14Z" fill="#fff" stroke="#444"/><path d="M11 4L14 2C16 0.500 18.500 3 17 5L15 8L16 9L14.500 10.500L9.500 5.500L11 4Z" fill="#333"/></svg>
<div class="l" style="top:356px">No Fill</div>
<svg style="left:91px;top:354px" width="20" height="16" viewBox="0 0 20 16"><rect x=".5" y=".5" width="19" height="15" fill="#fff" stroke="#e2e2e2"/><path d="M1 15L19 1" stroke="#c9374a" stroke-width="1"/></svg>
<div class="l" style="top:384px">Fill Options...</div>
</div>

<div class="box" style="left:8px;top:41px;width:83px;height:72px"></div>
<div class="box" style="left:474px;top:9px;width:56px;height:36px"></div>
<div class="box" style="left:550px;top:137px;width:683px;height:89px"></div>
<div class="box" style="left:277px;top:642px;width:1046px;height:33px"></div>
</body></html>
